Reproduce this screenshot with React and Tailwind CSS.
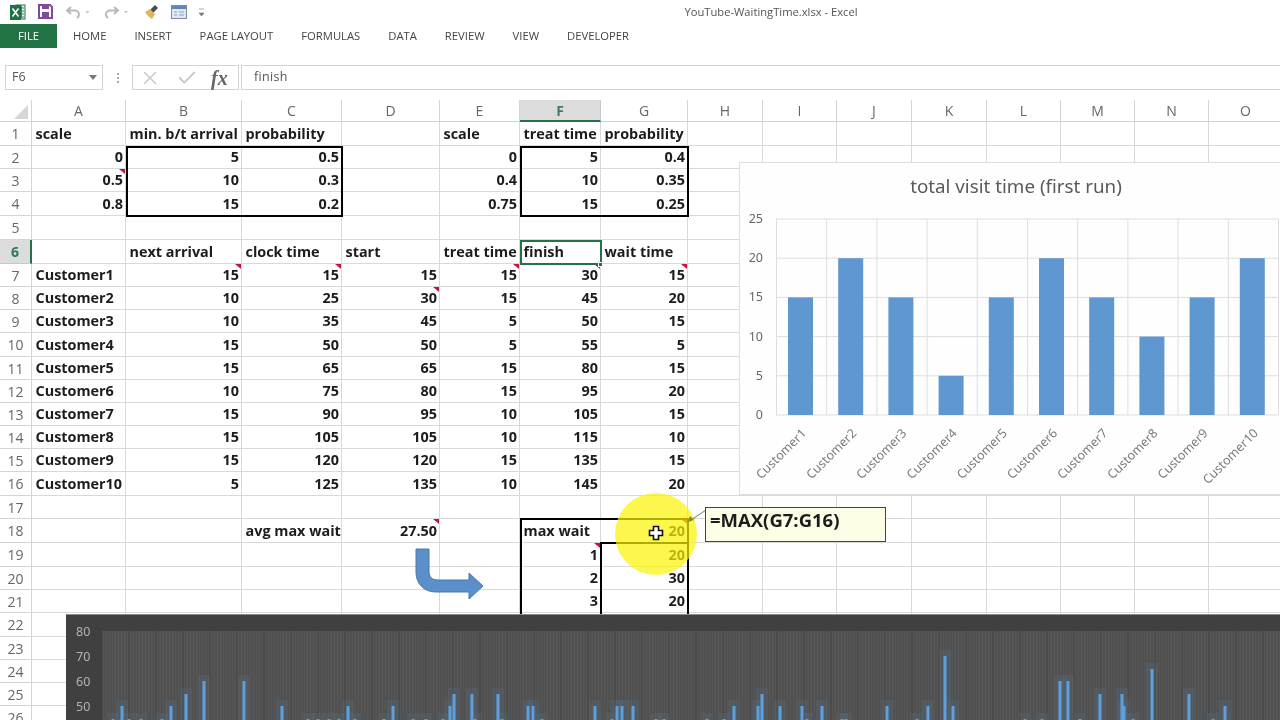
import { X, Check } from 'lucide-react'

const tabs = ['HOME', 'INSERT', 'PAGE LAYOUT', 'FORMULAS', 'DATA', 'REVIEW', 'VIEW', 'DEVELOPER']
const cols = ['A', 'B', 'C', 'D', 'E', 'F', 'G', 'H', 'I', 'J', 'K', 'L', 'M', 'N', 'O']

const sheet = {
  1: ['scale', 'min. b/t arrival', 'probability', '', 'scale', 'treat time', 'probability'],
  2: ['0', '5', '0.5', '', '0', '5', '0.4'],
  3: ['0.5', '10', '0.3', '', '0.4', '10', '0.35'],
  4: ['0.8', '15', '0.2', '', '0.75', '15', '0.25'],
  6: ['', 'next arrival', 'clock time', 'start', 'treat time', 'finish', 'wait time'],
  7: ['Customer1', '15', '15', '15', '15', '30', '15'],
  8: ['Customer2', '10', '25', '30', '15', '45', '20'],
  9: ['Customer3', '10', '35', '45', '5', '50', '15'],
  10: ['Customer4', '15', '50', '50', '5', '55', '5'],
  11: ['Customer5', '15', '65', '65', '15', '80', '15'],
  12: ['Customer6', '10', '75', '80', '15', '95', '20'],
  13: ['Customer7', '15', '90', '95', '10', '105', '15'],
  14: ['Customer8', '15', '105', '105', '10', '115', '10'],
  15: ['Customer9', '15', '120', '120', '15', '135', '15'],
  16: ['Customer10', '5', '125', '135', '10', '145', '20'],
  18: ['', '', 'avg max wait', '27.50', '', 'max wait', '20'],
  19: ['', '', '', '', '', '1', '20'],
  20: ['', '', '', '', '', '2', '30'],
  21: ['', '', '', '', '', '3', '20'],
}
const comments = ['A3', 'B7', 'C7', 'E7', 'F7', 'G7', 'D8', 'D18', 'F19', 'G18']
const rows = Array.from({ length: 26 }, (_, i) => i + 1)

const bars = [15, 20, 15, 5, 15, 20, 15, 10, 15, 20]

// x, top y of the spikes in the bottom chart
const spikes = [
  [113, 718], [122, 705], [129, 718], [141, 718], [162, 718], [171, 705], [186, 693], [204, 680], [244, 680], [282, 705],
  [308, 718], [318, 718], [329, 718], [339, 718], [348, 705], [355, 718], [384, 718], [393, 705], [413, 718], [426, 718],
  [443, 718], [450, 705], [454, 693], [472, 693], [475, 718], [498, 693], [502, 718], [528, 705], [533, 705], [542, 718],
  [595, 705], [612, 718], [617, 705], [622, 705], [633, 705], [656, 718], [664, 718], [707, 718], [724, 718], [734, 705],
  [758, 705], [762, 693], [780, 705], [802, 705], [807, 718], [822, 705], [842, 718], [846, 718], [887, 705], [917, 718],
  [928, 705], [945, 655], [953, 705], [1025, 718], [1042, 718], [1060, 680], [1068, 680], [1080, 718], [1100, 693],
  [1122, 693], [1124, 705], [1133, 718], [1152, 668], [1189, 693], [1213, 718], [1225, 705],
]
const stripes = Array.from({ length: 400 }, (_, i) => 102 + i * 3)

function QuickAccess() {
  return (
    <div className="w-[262px] h-full">
      <svg width="210" height="24" viewBox="0 0 210 24">
        <rect x="16" y="5" width="9" height="14" fill="#e8f1ec" stroke="#1f7246" />
        <path d="M19 8h5M19 11h5M19 14h5M19 17h5M21.5 6v12" stroke="#1f7246" strokeWidth="0.8" />
        <rect x="10" y="5" width="11" height="15" fill="#1f7246" />
        <path d="M12.5 8.5l6 8M18.5 8.5l-6 8" stroke="#fff" strokeWidth="1.6" />
        <path d="M39 5h11l2 2v11H39z" fill="#fff" stroke="#7d4a9e" strokeWidth="2" />
        <rect x="42" y="5" width="7" height="4" fill="#7d4a9e" />
        <rect x="42" y="12" width="7" height="6" fill="#7d4a9e" />
        <path d="M71 7l-4 3.5 4 3.5M67 10.5h8a4 4 0 0 1 4 4c0 2-1 3-2 3.5" fill="none" stroke="#b9b9b9" strokeWidth="2" />
        <path d="M85.5 11h4l-2 2.5z" fill="#c4c4c4" />
        <path d="M114 7l4 3.5-4 3.5M118 10.5h-8a4 4 0 0 0-4 4c0 2 1 3 2 3.5" fill="none" stroke="#b9b9b9" strokeWidth="2" />
        <path d="M124 11h4l-2 2.5z" fill="#c4c4c4" />
        <path d="M150 10l5-5 3 3-5 5z" fill="#4a4a4a" />
        <path d="M145 12l5-3 5 5-3 5c-2-1-5-4-7-7z" fill="#e0b45c" />
        <rect x="171.5" y="5.5" width="15" height="13" fill="#dfe9f5" stroke="#7a8ea6" />
        <rect x="172" y="6" width="14" height="3" fill="#5f87b5" />
        <path d="M174 12h3M174 15h3M179 12h5M179 15h5" stroke="#8e9fb3" />
        <path d="M199 9h5M199 13h5l-2.5 3z" fill="#777" stroke="#777" strokeWidth="0.6" />
      </svg>
    </div>
  )
}

function FormulaBar() {
  return (
    <div className="flex h-[25px] mt-[17px] text-[#555] text-[12.5px]">
      <div className="ml-[5px] w-[98px] border border-[#d4d4d4] flex items-center justify-between pl-[6px] pr-[5px]">
        <span>F6</span>
        <svg width="8" height="5" viewBox="0 0 8 5"><path d="M0 0h8L4 5z" fill="#777" /></svg>
      </div>
      <div className="w-[29px] flex flex-col items-center justify-center gap-[2px]">
        <i className="w-[2px] h-[2px] bg-[#aaa]" />
        <i className="w-[2px] h-[2px] bg-[#aaa]" />
        <i className="w-[2px] h-[2px] bg-[#aaa]" />
      </div>
      <div className="w-[107px] border border-[#d4d4d4] flex items-center pl-[6px] gap-[15px]">
        <X size={22} strokeWidth={1.6} className="text-[#c8c8c8]" />
        <Check size={22} strokeWidth={2} className="text-[#c8c8c8]" />
        <span className="ml-[-2px] text-[20px] text-[#666] italic font-bold font-['Liberation_Serif',serif]">fx</span>
      </div>
      <div className="ml-[2px] flex-1 border border-[#d4d4d4] border-r-0 flex items-center pl-[12px] tracking-[0.3px]">finish</div>
    </div>
  )
}

function Cell({ value, id }) {
  const numeric = /^[\d.]+$/.test(value)
  return (
    <div className={`relative border-r border-b border-[#d9d9d9] flex items-center pl-[3.500px] pr-[2px] font-bold text-[14.4px] text-[#1c1c1c] whitespace-nowrap ${numeric ? 'justify-end' : ''}`}>
      <span>{value}</span>
      {comments.includes(id) && (
        <i className="absolute top-0 right-0 w-0 h-0 border-l-[6px] border-l-transparent border-t-[5px] border-t-[#c2143e]" />
      )}
    </div>
  )
}

function Sheet() {
  return (
    <div className="mt-[10px] grid grid-cols-[32px_94px_116px_100px_98px_80px_81px_87px_75px_74px_75px_75px_74px_74px_74px_74px] grid-rows-[22px_24px_23px_23px_24px_24px_24px_23px_23px_23px_24px_23px_23px_23px_23px_23px_24px_23px_24px_24px_23px_23px_24px_23px_23px_23px_23px]">
      <div className="border-r border-b border-[#d4d4d4] flex items-end justify-end pr-[3px] pb-[2px]">
        <svg width="14" height="14" viewBox="0 0 14 14"><path d="M14 0v14H0z" fill="#d6d6d6" /></svg>
      </div>
      {cols.map((c) => (
        <div
          key={c}
          className={`flex items-center justify-center text-[14px] border-b border-r ${c === 'F' ? 'bg-[#dcdcdc] border-b-2 border-b-[#217346] border-r-[#c8c8c8] font-bold text-[#3f7d5e]' : 'border-[#d4d4d4] text-[#666]'}`}
        >
          {c}
        </div>
      ))}
      {rows.map((r) => (
        <div key={r} className="contents">
          <div className={`flex items-center justify-center text-[14px] border-b border-r ${r === 6 ? 'bg-[#dcdcdc] border-r-2 border-r-[#217346] border-b-[#c8c8c8] font-bold text-[#2f7a55]' : 'border-[#d4d4d4] text-[#666]'}`}>
            {r}
          </div>
          {cols.map((c, i) => (
            <Cell key={c} value={(sheet[r] && sheet[r][i]) || ''} id={c + r} />
          ))}
        </div>
      ))}
    </div>
  )
}

function VisitChart() {
  const zero = 414
  return (
    <div className="absolute left-[739px] top-[162px] w-[552px] h-[333px] bg-[#fefefe] border border-[#dedede]">
      <svg width="552" height="333" viewBox="739 162 552 333" className="block font-['Noto_Sans',sans-serif]">
        <text x="1015" y="192" textAnchor="middle" fontSize="18.8" fill="#595959">total visit time (first run)</text>
        {[0, 5, 10, 15, 20, 25].map((v) => (
          <g key={v}>
            <line x1="775" x2="1277" y1={zero - v * 7.84} y2={zero - v * 7.84} stroke="#dddddd" />
            <text x="762" y={zero - v * 7.84 + 4} textAnchor="end" fontSize="12.5" fill="#666">{v}</text>
          </g>
        ))}
        {Array.from({ length: 11 }, (_, i) => (
          <line key={i} x1={775.5 + i * 50.2} x2={775.5 + i * 50.2} y1="218" y2="414" stroke="#dddddd" />
        ))}
        {bars.map((v, i) => (
          <g key={i}>
            <rect x={787 + i * 50.2} y={zero - v * 7.84} width="25" height={v * 7.84} fill="#5f97d1" />
            <text
              x={806 + i * 50.2}
              y="433"
              textAnchor="end"
              fontSize="12.5"
              fill="#7a7a7a"
              transform={`rotate(-45 ${806 + i * 50.2} 433)`}
            >
              {'Customer' + (i + 1)}
            </text>
          </g>
        ))}
      </svg>
    </div>
  )
}

function CellBoxes() {
  return (
    <>
      <div className="absolute left-[126px] top-[146px] w-[217px] h-[71px] border-2 border-black" />
      <div className="absolute left-[520px] top-[146px] w-[169px] h-[71px] border-2 border-black" />
      <div className="absolute left-[520px] top-[240px] w-[82px] h-[25px] border-2 border-[#217346]" />
      <div className="absolute left-[598px] top-[262px] w-[5px] h-[5px] bg-[#217346] border border-white" />
      <div className="absolute left-[520px] top-[518px] w-[169px] h-[100px] border-2 border-b-0 border-black" />
      <div className="absolute left-[600px] top-[542px] w-[88px] h-[80px] border-t-2 border-l-2 border-black" />
    </>
  )
}

function Annotations() {
  return (
    <>
      <svg className="absolute left-[410px] top-[544px]" width="80" height="60" viewBox="410 544 80 60">
        <path
          d="M416 549h13v22c0 6 3 9 9 9h31v-7l14 13-14 13v-7h-33c-12 0-20-8-20-20z"
          fill="#5b8fc9"
          stroke="#4a78ab"
        />
      </svg>
      <div className="absolute left-[615px] top-[493px] w-[82px] h-[82px] rounded-full bg-[#fbf300] opacity-70" />
      <svg className="absolute left-[648px] top-[525px]" width="16" height="16" viewBox="0 0 16 16">
        <path d="M5.5 1.5h5v4h4v5h-4v4h-5v-4h-4v-5h4z" fill="#fff" stroke="#111" strokeWidth="1.6" />
      </svg>
      <svg className="absolute left-[686px] top-[506px]" width="22" height="18" viewBox="0 0 22 18">
        <path d="M20 4L5 14" stroke="#777" />
        <path d="M2 16l2-6 4 4z" fill="#8a8a30" />
      </svg>
      <div className="absolute left-[705px] top-[507px] w-[181px] h-[35px] bg-[#fdfde6] border border-[#444] pl-[4px] text-[18.5px] leading-[23px] font-bold text-[#1c1c1c]">
        =MAX(G7:G16)
      </div>
    </>
  )
}

function BottomChart() {
  return (
    <div className="absolute left-[66px] top-[614px] w-[1214px] h-[106px] bg-[#404040] border-t border-[#8a8a8a]">
      <svg width="1214" height="106" viewBox="66 614 1214 106" className="block font-['Noto_Sans',sans-serif]">
        <rect x="102" y="630" width="1178" height="90" fill="#565656" />
        {stripes.map((x, i) => (
          <line key={x} x1={x} x2={x} y1="630" y2="720" stroke={i % 9 === 0 ? '#404040' : '#4c4c4c'} />
        ))}
        {[80, 70, 60, 50].map((v, i) => (
          <text key={v} x="76" y={635 + i * 25} fontSize="12.5" fill="#b4b4b4">{v}</text>
        ))}
        {spikes.map(([x, y]) => (
          <g key={x}>
            <rect x={x - 6} y={y - 6} width="12" height={726 - y} fill="#5b9bd5" opacity="0.1" />
            <rect x={x - 1.5} y={y} width="3" height={720 - y} fill="#5f9fdc" />
          </g>
        ))}
      </svg>
    </div>
  )
}

export default function App() {
  return (
    <div className="relative w-[1280px] h-[720px] overflow-hidden bg-white blur-[0.4px] font-['Open_Sans',sans-serif]">
      <div className="flex h-6 text-[11.2px] text-[#555]">
        <QuickAccess />
        <div className="flex-1 text-center leading-6">YouTube-WaitingTime.xlsx - Excel</div>
      </div>
      <div className="flex h-6 text-[11.25px] text-[#444] items-center">
        <div className="w-[57px] h-full bg-[#217346] text-white flex items-center justify-center">FILE</div>
        <div className="flex pl-[2px]">
          {tabs.map((t) => (
            <span key={t} className="px-[14px]">{t}</span>
          ))}
        </div>
      </div>
      <FormulaBar />
      <Sheet />
      <CellBoxes />
      <VisitChart />
      <Annotations />
      <BottomChart />
    </div>
  )
}
